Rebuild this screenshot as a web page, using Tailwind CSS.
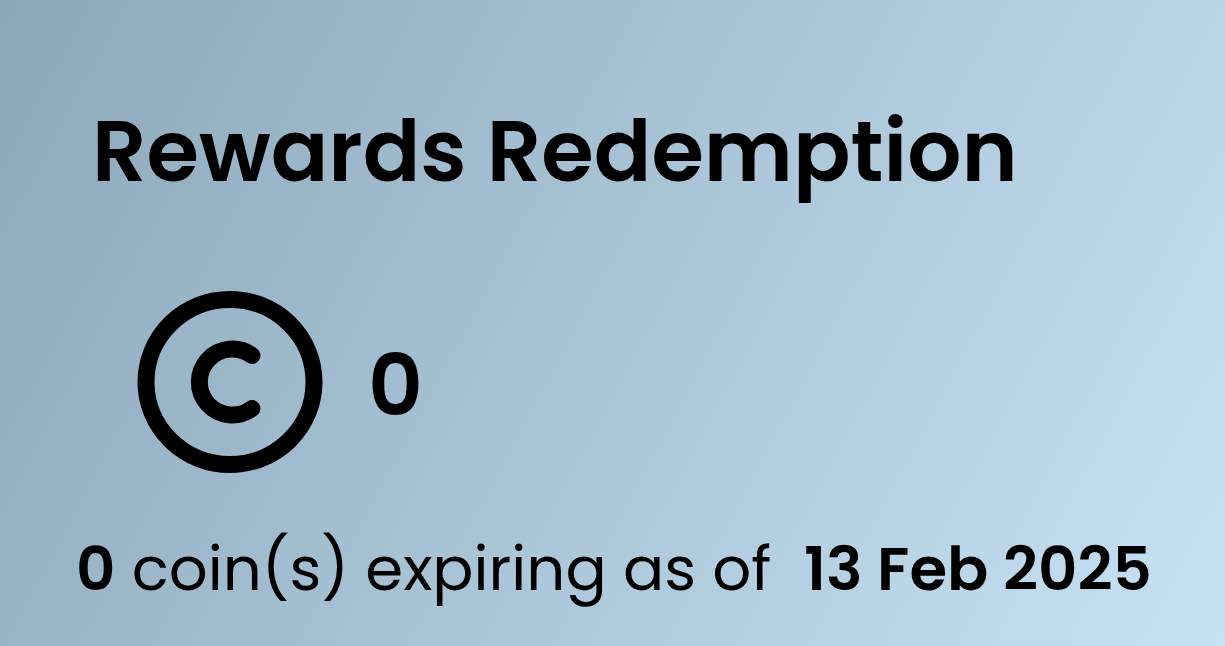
<!DOCTYPE html>
<html lang="en">
<head>
<meta charset="utf-8">
<meta name="viewport" content="width=device-width, initial-scale=1">
<title>Rewards Redemption</title>
<script src="https://cdn.jsdelivr.net/npm/@tailwindcss/browser@4"></script>
</head>
<body class="min-h-screen bg-linear-[118deg,#8da7ba,#c7e2f5] font-[Poppins,Inter,sans-serif] text-black">
<main class="flex flex-col items-start px-[76px] pt-[102px]">
  <h1 class="ml-4 text-[85px] leading-[100px] font-semibold whitespace-nowrap">Rewards Redemption</h1>
  <div class="mt-[88px] ml-[61px] flex items-center gap-[45px]">
    <svg class="h-[184px] w-[186px]" viewBox="0 0 186 184" fill="none" stroke="currentColor" stroke-width="17" stroke-linecap="round" aria-hidden="true">
      <ellipse cx="93" cy="92" rx="84" ry="82.5"/>
      <path d="M115 65.500A33 33 0 1 0 115 118.500"/>
    </svg>
    <span class="pt-2 text-[85px] leading-[100px] font-semibold">0</span>
  </div>
  <p class="mt-[51px] text-[61px] leading-[88px] whitespace-nowrap"><b class="font-semibold">0</b> coin(s) expiring as of&nbsp; <b class="font-semibold">13 Feb 2025</b></p>
</main>
</body>
</html>
